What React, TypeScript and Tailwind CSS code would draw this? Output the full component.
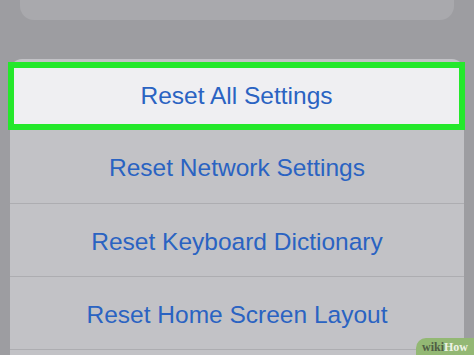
import React from "react";

const rows = ["Reset Network Settings", "Reset Keyboard Dictionary", "Reset Home Screen Layout"];

const App = () => {
  return (
    <div
      className="relative w-[474px] h-[355px] overflow-hidden bg-[#9d9da1]"
      style={{ fontFamily: '"Liberation Sans", Arial, sans-serif' }}
    >
      {/* Top card, cut off */}
      <div className="mx-[20px] h-[20px] rounded-b-[14px] bg-[#a9a9ad] overflow-hidden flex justify-center">
        <span className="-mt-[20px] text-[24px] leading-[24px] text-[#c9c9cd]">Erase All</span>
      </div>

      {/* Action sheet */}
      <div className="mt-[39px] mx-[10px] rounded-t-[12px] bg-[#c2c2c6] pt-[3px]">
        <div className="-ml-[2px] -mr-[1px] h-[68px] border-[6px] border-[#24e82b] bg-[#efeff2] flex items-center justify-center">
          <span className="text-[24.5px] text-[#2a63c2]">Reset All Settings</span>
        </div>
        {rows.map((label, i) => (
          <div
            key={label}
            className={`${i === 0 ? "h-[74px]" : "h-[73px]"} pt-[4px] border-b border-[#adadb1] flex items-center justify-center`}
          >
            <span className="text-[24.5px] text-[#2a63c2]">{label}</span>
          </div>
        ))}
        <div className="h-[40px]" />
      </div>

      {/* wikiHow badge */}
      <div className="absolute right-0 bottom-0 h-[17px] w-[58px] rounded-tl-[10px] bg-[#93b874] flex items-center justify-center">
        <span className="text-[12px] font-bold leading-none" style={{ fontFamily: '"Liberation Serif", serif' }}>
          <span className="text-[#4f5d44]">wiki</span>
          <span className="text-[#eef3e6]">How</span>
        </span>
      </div>
    </div>
  );
};

export default App;
